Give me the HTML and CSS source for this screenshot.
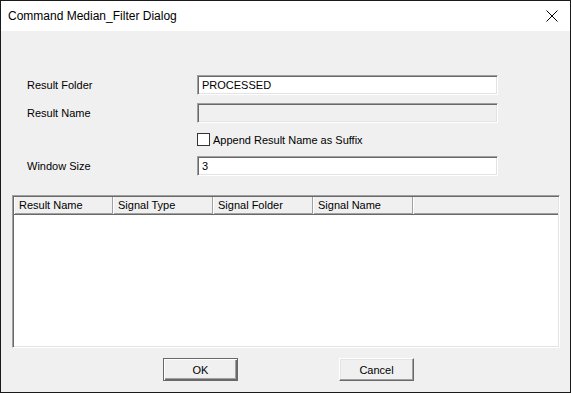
FILE: index.html
```html
<!DOCTYPE html>
<html lang="en">
<head>
    <meta charset="UTF-8">
    <title>Command Median_Filter Dialog</title>
    <link rel="stylesheet" href="styles.css">
</head>
<body>
    <div class="window">
        <div class="titlebar">
            <span class="title">Command Median_Filter Dialog</span>
            <svg class="close" width="12" height="12" viewBox="0 0 12 12">
                <path d="M0.5 0.5 L11.5 11.5 M11.5 0.5 L0.5 11.5" stroke="#000" stroke-width="1" fill="none"/>
            </svg>
        </div>
        <div class="content">
            <div class="form">
                <label class="label">Result Folder</label>
                <div class="field">PROCESSED</div>

                <label class="label">Result Name</label>
                <div class="field disabled"></div>

                <span></span>
                <div class="check-row">
                    <span class="checkbox"></span>
                    <span class="check-text">Append Result Name as Suffix</span>
                </div>

                <label class="label">Window Size</label>
                <div class="field">3</div>
            </div>

            <div class="list">
                <div class="list-header">
                    <div class="col">Result Name</div>
                    <div class="col">Signal Type</div>
                    <div class="col">Signal Folder</div>
                    <div class="col">Signal Name</div>
                    <div class="col-rest"></div>
                </div>
                <div class="list-body"></div>
            </div>

            <div class="buttons">
                <button class="btn default">OK</button>
                <button class="btn">Cancel</button>
            </div>
        </div>
    </div>
</body>
</html>
```

FILE: styles.css
```css
body {
    margin: 0;
    padding: 0;
    background: #f0f0f0;
    font-family: "Liberation Sans", Arial, sans-serif;
    font-size: 11px;
    color: #000;
}

.window {
    width: 571px;
    height: 393px;
    box-sizing: border-box;
    border: 1px solid #1a1a1a;
    background: #f0f0f0;
    display: flex;
    flex-direction: column;
}

.titlebar {
    height: 30px;
    background: #fff;
    display: flex;
    align-items: center;
    justify-content: space-between;
    padding: 0 12px 0 7px;
    flex-shrink: 0;
}

.title {
    font-family: "Liberation Sans", Arial, sans-serif;
    font-size: 12px;
    color: #000;
    margin-top: -1px;
}

.close {
    display: block;
}

.content {
    flex: 1;
    display: flex;
    flex-direction: column;
}

/* form rows */
.form {
    display: grid;
    grid-template-columns: 170px 301px;
    grid-template-rows: 20px 20px 17px 20px;
    row-gap: 8px;
    margin: 44px 0 0 26px;
    align-items: center;
}

.field {
    height: 20px;
    box-sizing: border-box;
    background: #fff;
    border-top: 1px solid #a0a0a0;
    border-left: 1px solid #a0a0a0;
    border-right: 1px solid #fff;
    border-bottom: 1px solid #fff;
    box-shadow: inset 1px 1px 0 #696969, inset -1px -1px 0 #e3e3e3;
    padding: 3px 0 0 4px;
    line-height: 13px;
}

.field.disabled {
    background: #f0f0f0;
}

.check-row {
    display: flex;
    align-items: center;
    gap: 3px;
}

.checkbox {
    width: 13px;
    height: 13px;
    box-sizing: border-box;
    border: 1px solid #333;
    background: #fff;
}

.check-text {
    font-size: 11px;
}

/* list view */
.list {
    margin: 19px 0 0 11px;
    width: 548px;
    height: 153px;
    box-sizing: border-box;
    border-top: 1px solid #a0a0a0;
    border-left: 1px solid #a0a0a0;
    border-right: 1px solid #fff;
    border-bottom: 1px solid #fff;
    box-shadow: inset 1px 1px 0 #696969, inset -1px -1px 0 #e3e3e3;
    padding: 1px;
    display: flex;
    flex-direction: column;
    background: #fff;
}

.list-header {
    display: flex;
    height: 17px;
    flex-shrink: 0;
    background: #f0f0f0;
    border-bottom: 1px solid #696969;
    box-shadow: inset 0 -1px 0 #a0a0a0;
}

.col {
    width: 100px;
    box-sizing: border-box;
    padding: 2px 0 0 4px;
    border-left: 1px solid #fff;
    border-right: 1px solid #a0a0a0;
    font-size: 11px;
    line-height: 13px;
}

.col:first-child {
    width: 99px;
}

.col-rest {
    flex: 1;
    border-left: 1px solid #fff;
}

.list-body {
    flex: 1;
    background: #fff;
}

/* buttons */
.buttons {
    display: flex;
    gap: 101px;
    margin: 10px 0 0 162px;
}

.btn {
    width: 75px;
    height: 23px;
    box-sizing: border-box;
    background: #f0f0f0;
    font-family: "Liberation Sans", Arial, sans-serif;
    font-size: 11px;
    color: #000;
    padding: 0;
    border-top: 1px solid #fff;
    border-left: 1px solid #fff;
    border-right: 1px solid #696969;
    border-bottom: 1px solid #696969;
    box-shadow: inset -1px -1px 0 #a0a0a0, inset 1px 1px 0 #e3e3e3;
}

.btn.default {
    border: 1px solid #696969;
    box-shadow: inset 1px 1px 0 #fff, inset -1px -1px 0 #696969, inset -2px -2px 0 #a0a0a0;
}
```
